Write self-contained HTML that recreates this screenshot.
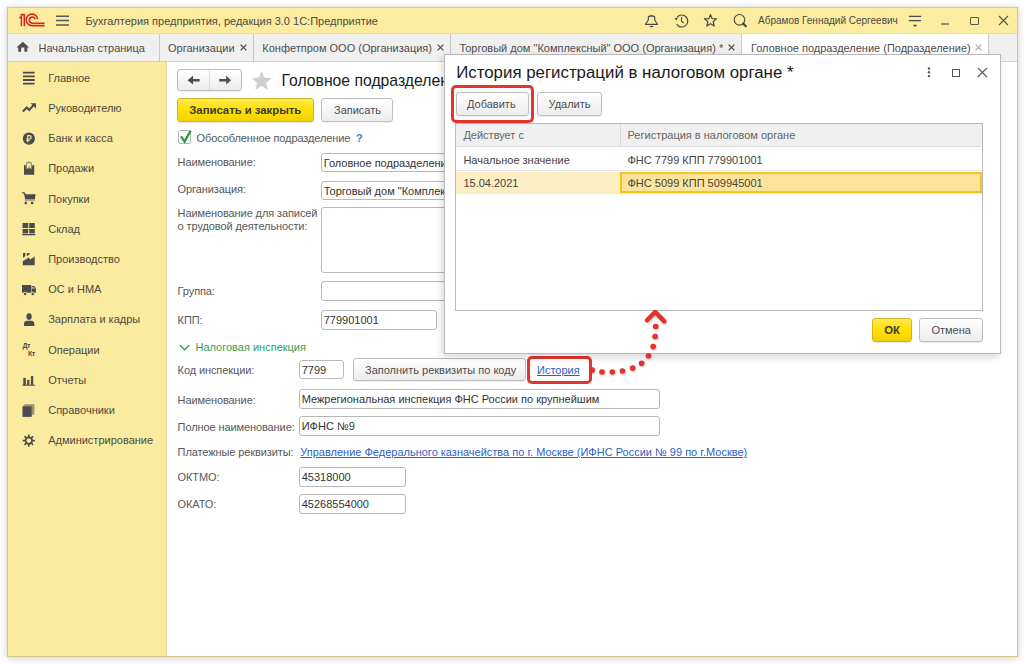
<!DOCTYPE html>
<html><head><meta charset="utf-8">
<style>
*{box-sizing:border-box;margin:0;padding:0}
html,body{width:1024px;height:664px;overflow:hidden;background:#fefefe}
body{font-family:"Liberation Sans",sans-serif;font-size:11px;color:#585858;position:relative}
.a{position:absolute;white-space:nowrap}
svg.a{overflow:visible}
</style></head><body>
<div class="a" style="left:7px;top:7px;width:1011px;height:650px;border:1px solid #d9c883;background:#fff;box-shadow:0 1px 7px rgba(0,0,0,0.2);"></div>
<div class="a" style="left:8px;top:8px;width:1009px;height:26px;background:#fbec9f;border-bottom:1px solid #efdf98;"></div>
<svg class="a" style="left:17px;top:11px;" width="30" height="18" viewBox="0 0 30 18"><g fill="none" stroke="#dd2424" stroke-width="1.55"><path d="M4.4 15.3V3.6H7.3V15.3M2.2 6.4H4.4"/><path d="M20.7 8.2A5.75 5.75 0 1 0 15.2 14.6H27.6"/><path d="M18.3 8.4A3.05 3.05 0 1 0 15.2 12.2H27.6"/></g></svg>
<svg class="a" style="left:56px;top:14px;" width="14" height="14" viewBox="0 0 14 14"><g stroke="#5a5a50" stroke-width="1.5"><path d="M0 2.2H13M0 6.5H13M0 11H13"/></g></svg>
<div class="a" style="left:85.5px;top:15.00px;font-size:11px;line-height:13px;color:#4a4a44;">Бухгалтерия предприятия, редакция 3.0 1С:Предприятие</div>
<svg class="a" style="left:642px;top:12px;" width="20" height="18" viewBox="0 0 20 18"><path d="M6.5 4.4L9.5 3.9L12.5 4.4L12.8 8.2L15.6 12.3H3.4L6.2 8.2Z" fill="none" stroke="#4a4a44" stroke-width="1.15" stroke-linejoin="round"/><path d="M8.6 4L9.5 2.4L10.4 4Z" fill="#4a4a44"/><ellipse cx="9.5" cy="14.5" rx="1.9" ry="0.8" fill="#4a4a44"/></svg>
<svg class="a" style="left:670px;top:12px;" width="22" height="18" viewBox="0 0 22 18"><g fill="none" stroke="#4a4a44" stroke-width="1.15"><path d="M6.6 12.1A6 6 0 1 0 7.3 5"/><path d="M11.5 5.3V9L13.7 11.2"/></g><path d="M4.6 6.2L8.2 5.2L6.3 8.6Z" fill="#4a4a44"/></svg>
<svg class="a" style="left:700px;top:12px;" width="22" height="18" viewBox="0 0 22 18"><path d="M10.50 2.50 L12.12 6.68 L16.59 6.92 L13.12 9.75 L14.26 14.08 L10.50 11.65 L6.74 14.08 L7.88 9.75 L4.41 6.92 L8.88 6.68Z" fill="none" stroke="#4a4a44" stroke-width="1.15" stroke-linejoin="round"/></svg>
<svg class="a" style="left:730px;top:12px;" width="20" height="18" viewBox="0 0 20 18"><circle cx="9.5" cy="7.8" r="5.3" fill="none" stroke="#4a4a44" stroke-width="1.15"/><path d="M13.2 11.6L15.8 14.2" stroke="#4a4a44" stroke-width="2.2" stroke-linecap="round"/></svg>
<div class="a" style="left:758px;top:15.00px;font-size:10px;line-height:12px;color:#4a4a44;">Абрамов Геннадий Сергеевич</div>
<svg class="a" style="left:904px;top:12px;" width="22" height="18" viewBox="0 0 22 18"><g stroke="#4a4a44" stroke-width="1.15" stroke-linecap="round"><path d="M5.3 4.3H16.7M5.3 8.6H16.7"/></g><path d="M8.9 12.7H13.2L11.05 15.1Z" fill="#4a4a44"/></svg>
<svg class="a" style="left:940px;top:20px;" width="10" height="6" viewBox="0 0 10 6"><path d="M1 4H9" stroke="#5a584a" stroke-width="1.3"/></svg>
<div class="a" style="left:970px;top:16.5px;width:8.5px;height:8.3px;border:1.2px solid #5a584a;border-radius:1px;"></div>
<svg class="a" style="left:998px;top:15px;" width="11" height="11" viewBox="0 0 11 11"><path d="M1 1L10 10M10 1L1 10" stroke="#5a584a" stroke-width="1.15"/></svg>
<div class="a" style="left:8px;top:34px;width:1009px;height:28px;background:#f0f0f0;border-bottom:1px solid #d2d2d2;"></div>
<div class="a" style="left:159px;top:34px;width:1px;height:28px;background:#c9c9c9;"></div>
<div class="a" style="left:253px;top:34px;width:1px;height:28px;background:#c9c9c9;"></div>
<div class="a" style="left:450px;top:34px;width:1px;height:28px;background:#c9c9c9;"></div>
<div class="a" style="left:741px;top:34px;width:1px;height:28px;background:#c9c9c9;"></div>
<div class="a" style="left:988px;top:34px;width:1px;height:28px;background:#c9c9c9;"></div>
<div class="a" style="left:742px;top:34px;width:246px;height:28px;background:#fff;"></div>
<svg class="a" style="left:16px;top:41px;" width="14" height="11" viewBox="0 0 14 11"><path d="M6.8 0.7L13.1 6.6H11.3V10.8H8.4V6.6H5.2V10.8H2.3V6.6H0.5Z" fill="#4d4d4d"/></svg>
<div class="a" style="left:38.5px;top:42.00px;font-size:11px;line-height:13px;color:#4d4d4d;">Начальная страница</div>
<div class="a" style="left:168px;top:42.00px;font-size:11px;line-height:13px;color:#4d4d4d;">Организации</div>
<svg class="a" style="left:239.5px;top:44px;" width="7" height="7" viewBox="0 0 7 7"><path d="M0.6 0.6L6.4 6.4M6.4 0.6L0.6 6.4" stroke="#4d4d4d" stroke-width="1.3"/></svg>
<div class="a" style="left:262.3px;top:42.00px;font-size:11px;line-height:13px;color:#4d4d4d;">Конфетпром ООО (Организация)</div>
<svg class="a" style="left:436.5px;top:44px;" width="7" height="7" viewBox="0 0 7 7"><path d="M0.6 0.6L6.4 6.4M6.4 0.6L0.6 6.4" stroke="#4d4d4d" stroke-width="1.3"/></svg>
<div class="a" style="left:459.4px;top:42.00px;font-size:11px;line-height:13px;color:#4d4d4d;">Торговый дом "Комплексный" ООО (Организация) *</div>
<svg class="a" style="left:728px;top:44px;" width="7" height="7" viewBox="0 0 7 7"><path d="M0.6 0.6L6.4 6.4M6.4 0.6L0.6 6.4" stroke="#4d4d4d" stroke-width="1.3"/></svg>
<div class="a" style="left:751px;top:42.00px;font-size:11px;line-height:13px;color:#4d4d4d;">Головное подразделение (Подразделение)</div>
<svg class="a" style="left:975px;top:44px;" width="7" height="7" viewBox="0 0 7 7"><path d="M0.6 0.6L6.4 6.4M6.4 0.6L0.6 6.4" stroke="#a8a8a8" stroke-width="1.2"/></svg>
<div class="a" style="left:8px;top:62px;width:159px;height:594px;background:#fbeb9e;border-right:1px solid #e6d79a;"></div>
<div class="a" style="left:48.2px;top:72.00px;font-size:11px;line-height:13px;color:#4a4a44;">Главное</div>
<div class="a" style="left:48.2px;top:102.00px;font-size:11px;line-height:13px;color:#4a4a44;">Руководителю</div>
<div class="a" style="left:48.2px;top:132.00px;font-size:11px;line-height:13px;color:#4a4a44;">Банк и касса</div>
<div class="a" style="left:48.2px;top:162.00px;font-size:11px;line-height:13px;color:#4a4a44;">Продажи</div>
<div class="a" style="left:48.2px;top:193.00px;font-size:11px;line-height:13px;color:#4a4a44;">Покупки</div>
<div class="a" style="left:48.2px;top:223.00px;font-size:11px;line-height:13px;color:#4a4a44;">Склад</div>
<div class="a" style="left:48.2px;top:253.00px;font-size:11px;line-height:13px;color:#4a4a44;">Производство</div>
<div class="a" style="left:48.2px;top:283.00px;font-size:11px;line-height:13px;color:#4a4a44;">ОС и НМА</div>
<div class="a" style="left:48.2px;top:313.00px;font-size:11px;line-height:13px;color:#4a4a44;">Зарплата и кадры</div>
<div class="a" style="left:48.2px;top:344.00px;font-size:11px;line-height:13px;color:#4a4a44;">Операции</div>
<div class="a" style="left:48.2px;top:374.00px;font-size:11px;line-height:13px;color:#4a4a44;">Отчеты</div>
<div class="a" style="left:48.2px;top:404.00px;font-size:11px;line-height:13px;color:#4a4a44;">Справочники</div>
<div class="a" style="left:48.2px;top:434.00px;font-size:11px;line-height:13px;color:#4a4a44;">Администрирование</div>
<svg class="a" style="left:22px;top:71px;" width="14" height="14" viewBox="0 0 14 14"><g stroke="#4b4b4b" stroke-width="1.8"><path d="M1 1.6H12.7M1 5.3H12.7M1 9H12.7M1 12.6H12.7"/></g></svg>
<svg class="a" style="left:22px;top:102px;" width="15" height="11" viewBox="0 0 15 11"><path d="M0.8 9.5L4.8 5.5L7.3 8L11.5 3.2" fill="none" stroke="#4b4b4b" stroke-width="2"/><path d="M8.6 1.2H14V6.6Z" fill="#4b4b4b"/></svg>
<svg class="a" style="left:22px;top:132px;" width="14" height="14" viewBox="0 0 14 14"><circle cx="6.9" cy="6.6" r="6.05" fill="#4b4b4b"/><g stroke="#f3e6a8" stroke-width="1.15" fill="none"><path d="M5.7 10.6V3.6H7.5A1.7 1.7 0 0 1 7.5 7H4.3M4.3 8.5H7.6"/></g></svg>
<svg class="a" style="left:23px;top:160px;" width="13" height="16" viewBox="0 0 13 16"><path d="M3.4 8V4.6A2.55 2.55 0 0 1 8.5 4.6V8" fill="none" stroke="#8c8872" stroke-width="1.2"/><path d="M1 4.9H2.3L3.3 8.5H5.4L6 5.4L6.6 8.5H8.6L9.7 4.9H11.2V14.7H1Z" fill="#4b4b4b"/></svg>
<svg class="a" style="left:18px;top:186px;" width="22" height="22" viewBox="0 0 22 22"><path d="M4 6.9H6.2L7.2 9" fill="none" stroke="#4b4b4b" stroke-width="1.3"/><path d="M6.3 8.3H17.6L16.8 13.4H7Z" fill="#4b4b4b"/><rect x="6.9" y="14.1" width="10" height="1" fill="#a9a27a"/><rect x="6.6" y="15.7" width="2.4" height="2.5" rx="0.7" fill="#4b4b4b"/><rect x="12.9" y="15.7" width="2.4" height="2.5" rx="0.7" fill="#4b4b4b"/></svg>
<svg class="a" style="left:22px;top:222px;" width="14" height="14" viewBox="0 0 14 14"><g fill="#4b4b4b"><rect x="0.6" y="1" width="5.6" height="5"/><rect x="7.2" y="1" width="5.6" height="5"/><rect x="0.6" y="7" width="5.6" height="4.4"/><rect x="7.2" y="7" width="5.6" height="4.4"/><rect x="0.2" y="12" width="13" height="1.3"/></g></svg>
<svg class="a" style="left:18px;top:248px;" width="22" height="22" viewBox="0 0 22 22"><g fill="#4b4b4b"><path d="M4.8 13.3L10.9 9.4L12.2 11.6L16.7 8.6V17.3H4.8Z"/><path d="M5 5H7.5L7.2 8.3L5 9.7Z"/><path d="M8.9 5H11.8L10.9 6.9L8.9 8.2Z"/></g></svg>
<svg class="a" style="left:18px;top:278px;" width="22" height="22" viewBox="0 0 22 22"><g fill="#4b4b4b"><path d="M4 7H13.1V14.7H4Z"/><path d="M13.6 8H16.3L17.9 10.2V14.7H13.6Z"/></g><path d="M14.1 8.9H16L16.9 10.7H14.1Z" fill="#bdb58a"/><circle cx="7" cy="15.9" r="1.7" fill="#4b4b4b" stroke="#fbeb9e" stroke-width="0.9"/><circle cx="14.7" cy="15.9" r="1.7" fill="#4b4b4b" stroke="#fbeb9e" stroke-width="0.9"/></svg>
<svg class="a" style="left:23px;top:313px;" width="12" height="13" viewBox="0 0 12 13"><ellipse cx="6.05" cy="3.6" rx="2.65" ry="3.3" fill="#4b4b4b"/><path d="M1 12.9V10.4C1 8.6 2.4 7.7 4.2 7.7H8C9.8 7.7 11.3 8.6 11.3 10.4V12.9Z" fill="#4b4b4b"/></svg>
<div class="a" style="left:22.4px;top:342.00px;font-size:7px;line-height:8px;color:#4b4b4b;font-weight:bold;letter-spacing:-0.3px;">Дт</div>
<div class="a" style="left:27.9px;top:350.00px;font-size:7px;line-height:8px;color:#4b4b4b;font-weight:bold;letter-spacing:-0.3px;">Кт</div>
<svg class="a" style="left:18px;top:370px;" width="22" height="22" viewBox="0 0 22 22"><g fill="#4b4b4b"><rect x="5.3" y="7.9" width="2.5" height="7.2"/><rect x="9.1" y="9.8" width="2.3" height="5.3"/><rect x="12.9" y="6.1" width="2.3" height="9"/><rect x="4.3" y="14.7" width="12.8" height="1"/></g></svg>
<svg class="a" style="left:22px;top:403px;" width="14" height="15" viewBox="0 0 14 15"><path d="M2.8 1.2H12.4V11.8H9.6V13.8H0.6V3.4Z" fill="#9a9470"/><rect x="0.6" y="3.4" width="9" height="10.4" fill="#4b4b4b"/></svg>
<svg class="a" style="left:23px;top:434px;" width="13" height="13" viewBox="0 0 13 13"><g transform="translate(5.8,6.6)"><circle r="3.3" fill="none" stroke="#4b4b4b" stroke-width="1.8"/><rect x="-0.8" y="-6.1" width="1.6" height="3" fill="#4b4b4b" transform="rotate(0)"/><rect x="-0.8" y="-6.1" width="1.6" height="3" fill="#4b4b4b" transform="rotate(45)"/><rect x="-0.8" y="-6.1" width="1.6" height="3" fill="#4b4b4b" transform="rotate(90)"/><rect x="-0.8" y="-6.1" width="1.6" height="3" fill="#4b4b4b" transform="rotate(135)"/><rect x="-0.8" y="-6.1" width="1.6" height="3" fill="#4b4b4b" transform="rotate(180)"/><rect x="-0.8" y="-6.1" width="1.6" height="3" fill="#4b4b4b" transform="rotate(225)"/><rect x="-0.8" y="-6.1" width="1.6" height="3" fill="#4b4b4b" transform="rotate(270)"/><rect x="-0.8" y="-6.1" width="1.6" height="3" fill="#4b4b4b" transform="rotate(315)"/></g></svg>
<div class="a" style="left:177px;top:69px;width:65px;height:22px;border:1px solid #bdbdbd;border-radius:3px;background:linear-gradient(#fff,#ececec);box-shadow:0 1px 1px rgba(0,0,0,0.06);"></div>
<div class="a" style="left:209px;top:70px;width:1px;height:20px;background:#dcdcdc;"></div>
<svg class="a" style="left:185px;top:74px;" width="17" height="13" viewBox="0 0 17 13"><path d="M2.6 6.2L8 1.8V4.9H14.6V7.5H8V10.6Z" fill="#4f4f4f"/></svg>
<svg class="a" style="left:217px;top:74px;" width="17" height="13" viewBox="0 0 17 13"><path d="M14.1 6.2L9.1 1.8V4.9H2.2V7.5H9.1V10.6Z" fill="#4f4f4f"/></svg>
<svg class="a" style="left:251px;top:70px;" width="22" height="21" viewBox="0 0 22 21"><path d="M10.6 1L13.4 7.6L20.5 8.2L15.1 12.8L16.8 19.8L10.6 16.1L4.4 19.8L6.1 12.8L0.7 8.2L7.8 7.6Z" fill="#cfcfcf"/></svg>
<div class="a" style="left:281.5px;top:71.00px;font-size:15.75px;line-height:19px;color:#1a1a1a;">Головное подразделение (Подразделение)</div>
<div class="a" style="left:177px;top:98px;width:137px;height:24px;border:1px solid #cdb32e;border-radius:3px;background:linear-gradient(#fde94f,#ffe000 50%,#f4d300);box-shadow:0 1px 1px rgba(0,0,0,0.1);"></div>
<div class="a" style="left:189.3px;top:104.00px;font-size:11.3px;line-height:13px;color:#3a3a3a;font-weight:bold;">Записать и закрыть</div>
<div class="a" style="left:321px;top:98px;width:72px;height:24px;border:1px solid #bdbdbd;border-radius:3px;background:linear-gradient(#fff,#ececec);box-shadow:0 1px 1px rgba(0,0,0,0.06);"></div>
<div class="a" style="left:334px;top:104.00px;font-size:11px;line-height:13px;color:#4d4d4d;">Записать</div>
<div class="a" style="left:178px;top:130px;width:13px;height:14px;border:1px solid #b5b5b5;border-radius:2px;background:#fff;"></div>
<svg class="a" style="left:179px;top:128px;" width="14" height="16" viewBox="0 0 14 16"><path d="M2 8.3L5.6 13.6L11.6 2.8" fill="none" stroke="#1f9e3c" stroke-width="2.3"/></svg>
<div class="a" style="left:196.6px;top:132.00px;font-size:11px;line-height:13px;color:#585858;letter-spacing:-0.12px;">Обособленное подразделение</div>
<div class="a" style="left:356px;top:132.00px;font-size:11px;line-height:13px;color:#3c82c8;font-weight:bold;">?</div>
<div class="a" style="left:177.6px;top:156.00px;font-size:11px;line-height:13px;letter-spacing:-0.1px;">Наименование:</div>
<div class="a" style="left:321px;top:153px;width:149px;height:19px;border:1px solid #b8b8b8;border-radius:3px;background:#fff;"></div>
<div class="a" style="left:323.7px;top:157.00px;font-size:11px;line-height:13px;color:#333;">Головное подразделение</div>
<div class="a" style="left:177.6px;top:183.00px;font-size:11px;line-height:13px;letter-spacing:-0.1px;">Организация:</div>
<div class="a" style="left:321px;top:181px;width:149px;height:19px;border:1px solid #b8b8b8;border-radius:3px;background:#fff;"></div>
<div class="a" style="left:323.7px;top:185.00px;font-size:11px;line-height:13px;color:#333;">Торговый дом "Комплексный" ООО</div>
<div class="a" style="left:177.6px;top:207.00px;font-size:11px;line-height:13px;letter-spacing:-0.1px;">Наименование для записей</div>
<div class="a" style="left:177.6px;top:220.00px;font-size:11px;line-height:13px;letter-spacing:-0.1px;">о трудовой деятельности:</div>
<div class="a" style="left:321px;top:207px;width:149px;height:66px;border:1px solid #b8b8b8;border-radius:3px;background:#fff;"></div>
<div class="a" style="left:177.6px;top:285.00px;font-size:11px;line-height:13px;letter-spacing:-0.1px;">Группа:</div>
<div class="a" style="left:321px;top:281px;width:149px;height:20px;border:1px solid #b8b8b8;border-radius:3px;background:#fff;"></div>
<div class="a" style="left:177.6px;top:314.00px;font-size:11px;line-height:13px;letter-spacing:-0.1px;">КПП:</div>
<div class="a" style="left:321px;top:310px;width:116px;height:20px;border:1px solid #b8b8b8;border-radius:3px;background:#fff;"></div>
<div class="a" style="left:323.7px;top:314.00px;font-size:11px;line-height:13px;color:#333;">779901001</div>
<svg class="a" style="left:179px;top:344px;" width="12" height="8" viewBox="0 0 12 8"><path d="M1 1.2L5.6 5.8L10.2 1.2" fill="none" stroke="#3aa05a" stroke-width="1.5"/></svg>
<div class="a" style="left:195.5px;top:341.00px;font-size:11px;line-height:13px;color:#2f9e58;">Налоговая инспекция</div>
<div class="a" style="left:177.6px;top:364.00px;font-size:11px;line-height:13px;letter-spacing:-0.1px;">Код инспекции:</div>
<div class="a" style="left:299px;top:360px;width:45px;height:19px;border:1px solid #b8b8b8;border-radius:3px;background:#fff;"></div>
<div class="a" style="left:301.7px;top:364.00px;font-size:11px;line-height:13px;color:#333;">7799</div>
<div class="a" style="left:353px;top:358px;width:173px;height:23px;border:1px solid #bdbdbd;border-radius:3px;background:linear-gradient(#fff,#ececec);box-shadow:0 1px 1px rgba(0,0,0,0.06);"></div>
<div class="a" style="left:365px;top:364.00px;font-size:11px;line-height:13px;color:#4d4d4d;">Заполнить реквизиты по коду</div>
<div class="a" style="left:537px;top:364.00px;font-size:11px;line-height:13px;color:#2d5fc4;text-decoration:underline;">История</div>
<div class="a" style="left:177.6px;top:394.00px;font-size:11px;line-height:13px;letter-spacing:-0.1px;">Наименование:</div>
<div class="a" style="left:299px;top:389px;width:361px;height:20px;border:1px solid #b8b8b8;border-radius:3px;background:#fff;"></div>
<div class="a" style="left:301.7px;top:393.00px;font-size:11px;line-height:13px;color:#333;">Межрегиональная инспекция ФНС России по крупнейшим</div>
<div class="a" style="left:177.6px;top:421.00px;font-size:11px;line-height:13px;letter-spacing:-0.1px;">Полное наименование:</div>
<div class="a" style="left:299px;top:416px;width:361px;height:20px;border:1px solid #b8b8b8;border-radius:3px;background:#fff;"></div>
<div class="a" style="left:301.7px;top:420.00px;font-size:11px;line-height:13px;color:#333;">ИФНС №9</div>
<div class="a" style="left:177.6px;top:446.00px;font-size:11px;line-height:13px;letter-spacing:-0.1px;">Платежные реквизиты:</div>
<div class="a" style="left:300.3px;top:446.00px;font-size:11px;line-height:13px;color:#2d5fc4;text-decoration:underline;">Управление Федерального казначейства по г. Москве (ИФНС России № 99 по г.Москве)</div>
<div class="a" style="left:177.6px;top:471.00px;font-size:11px;line-height:13px;letter-spacing:-0.1px;">ОКТМО:</div>
<div class="a" style="left:299px;top:467px;width:107px;height:20px;border:1px solid #b8b8b8;border-radius:3px;background:#fff;"></div>
<div class="a" style="left:301.7px;top:471.00px;font-size:11px;line-height:13px;color:#333;">45318000</div>
<div class="a" style="left:177.6px;top:498.00px;font-size:11px;line-height:13px;letter-spacing:-0.1px;">ОКАТО:</div>
<div class="a" style="left:299px;top:494px;width:107px;height:20px;border:1px solid #b8b8b8;border-radius:3px;background:#fff;"></div>
<div class="a" style="left:301.7px;top:498.00px;font-size:11px;line-height:13px;color:#333;">45268554000</div>
<div class="a" style="left:527px;top:356px;width:65px;height:28px;border:3px solid #e2352d;border-radius:5px;"></div>
<div class="a" style="left:444px;top:54px;width:557px;height:300px;border:1px solid #b9b9b9;background:#fff;box-shadow:-2px 3px 8px rgba(0,0,0,0.16);"></div>
<div class="a" style="left:456.2px;top:63.00px;font-size:16.85px;line-height:20px;color:#1a1a1a;">История регистраций в налоговом органе *</div>
<svg class="a" style="left:927px;top:67px;" width="4" height="11" viewBox="0 0 4 11"><g fill="#555"><circle cx="2" cy="1.5" r="1.2"/><circle cx="2" cy="5.3" r="1.2"/><circle cx="2" cy="9.1" r="1.2"/></g></svg>
<div class="a" style="left:952px;top:69px;width:8px;height:8px;border:1.2px solid #555;"></div>
<svg class="a" style="left:977px;top:67px;" width="11" height="11" viewBox="0 0 11 11"><path d="M0.8 0.8L10 10M10 0.8L0.8 10" stroke="#555" stroke-width="1.2"/></svg>
<div class="a" style="left:456px;top:92px;width:73px;height:24px;border:1px solid #bdbdbd;border-radius:3px;background:linear-gradient(#fff,#ececec);box-shadow:0 1px 1px rgba(0,0,0,0.08);"></div>
<div class="a" style="left:467px;top:98.00px;font-size:11px;line-height:13px;color:#4d4d4d;">Добавить</div>
<div class="a" style="left:537px;top:92px;width:65px;height:24px;border:1px solid #bdbdbd;border-radius:3px;background:linear-gradient(#fff,#ececec);box-shadow:0 1px 1px rgba(0,0,0,0.08);"></div>
<div class="a" style="left:548.5px;top:98.00px;font-size:11px;line-height:13px;color:#4d4d4d;">Удалить</div>
<div class="a" style="left:451px;top:85px;width:83px;height:38px;border:3px solid #e2352d;border-radius:5px;"></div>
<div class="a" style="left:455px;top:123px;width:528px;height:188px;border:1px solid #b9b9b9;background:#fff;"></div>
<div class="a" style="left:456px;top:124px;width:526px;height:23px;background:#f0f0f0;border-bottom:1px solid #dedede;"></div>
<div class="a" style="left:620px;top:124px;width:1px;height:23px;background:#d9d9d9;"></div>
<div class="a" style="left:463.4px;top:129.00px;font-size:11px;line-height:13px;color:#666;">Действует с</div>
<div class="a" style="left:627.5px;top:129.00px;font-size:11px;line-height:13px;color:#666;">Регистрация в налоговом органе</div>
<div class="a" style="left:456px;top:170px;width:526px;height:1px;background:#ececec;"></div>
<div class="a" style="left:463.4px;top:154.00px;font-size:11px;line-height:13px;color:#444;">Начальное значение</div>
<div class="a" style="left:627.5px;top:154.00px;font-size:11px;line-height:13px;color:#444;">ФНС 7799 КПП 779901001</div>
<div class="a" style="left:456px;top:172px;width:526px;height:22px;background:#fdefc3;border-bottom:1px solid #e9e9e9;"></div>
<div class="a" style="left:620px;top:172px;width:362px;height:21px;border:2px solid #f6c41c;background:#fde498;"></div>
<div class="a" style="left:463.4px;top:177.00px;font-size:11px;line-height:13px;color:#444;">15.04.2021</div>
<div class="a" style="left:627.5px;top:177.00px;font-size:11px;line-height:13px;color:#444;">ФНС 5099 КПП 509945001</div>
<div class="a" style="left:872px;top:318px;width:40px;height:24px;border:1px solid #cdb32e;border-radius:3px;background:linear-gradient(#fde94f,#ffe000 50%,#f4d300);box-shadow:0 1px 1px rgba(0,0,0,0.1);"></div>
<div class="a" style="left:884.3px;top:324.00px;font-size:11.3px;line-height:13px;color:#3a3a3a;font-weight:bold;">ОК</div>
<div class="a" style="left:919px;top:318px;width:64px;height:24px;border:1px solid #bdbdbd;border-radius:3px;background:linear-gradient(#fff,#ececec);box-shadow:0 1px 1px rgba(0,0,0,0.08);"></div>
<div class="a" style="left:931.4px;top:324.00px;font-size:11px;line-height:13px;color:#4d4d4d;">Отмена</div>
<svg class="a" style="left:580px;top:300px;" width="100" height="80" viewBox="0 0 100 80"><defs><filter id="sh" x="-50%" y="-50%" width="200%" height="200%"><feDropShadow dx="0.6" dy="1" stdDeviation="0.9" flood-color="#000" flood-opacity="0.3"/></filter></defs><g filter="url(#sh)"><circle cx="12.2" cy="70.1" r="2.8" fill="#e0322d"/><circle cx="22.0" cy="72.0" r="2.8" fill="#e0322d"/><circle cx="32.3" cy="72.0" r="2.8" fill="#e0322d"/><circle cx="42.5" cy="71.0" r="2.8" fill="#e0322d"/><circle cx="52.7" cy="68.1" r="2.8" fill="#e0322d"/><circle cx="61.6" cy="63.2" r="2.8" fill="#e0322d"/><circle cx="68.5" cy="55.8" r="2.8" fill="#e0322d"/><circle cx="73.2" cy="46.6" r="2.8" fill="#e0322d"/><circle cx="75.1" cy="36.5" r="2.8" fill="#e0322d"/><circle cx="75.7" cy="26.5" r="2.8" fill="#e0322d"/><path d="M647 320.3L655.2 312L664.3 321.4" transform="translate(-580,-300)" fill="none" stroke="#e0322d" stroke-width="4.4" stroke-linecap="round" stroke-linejoin="round"/></g></svg>
</body></html>
